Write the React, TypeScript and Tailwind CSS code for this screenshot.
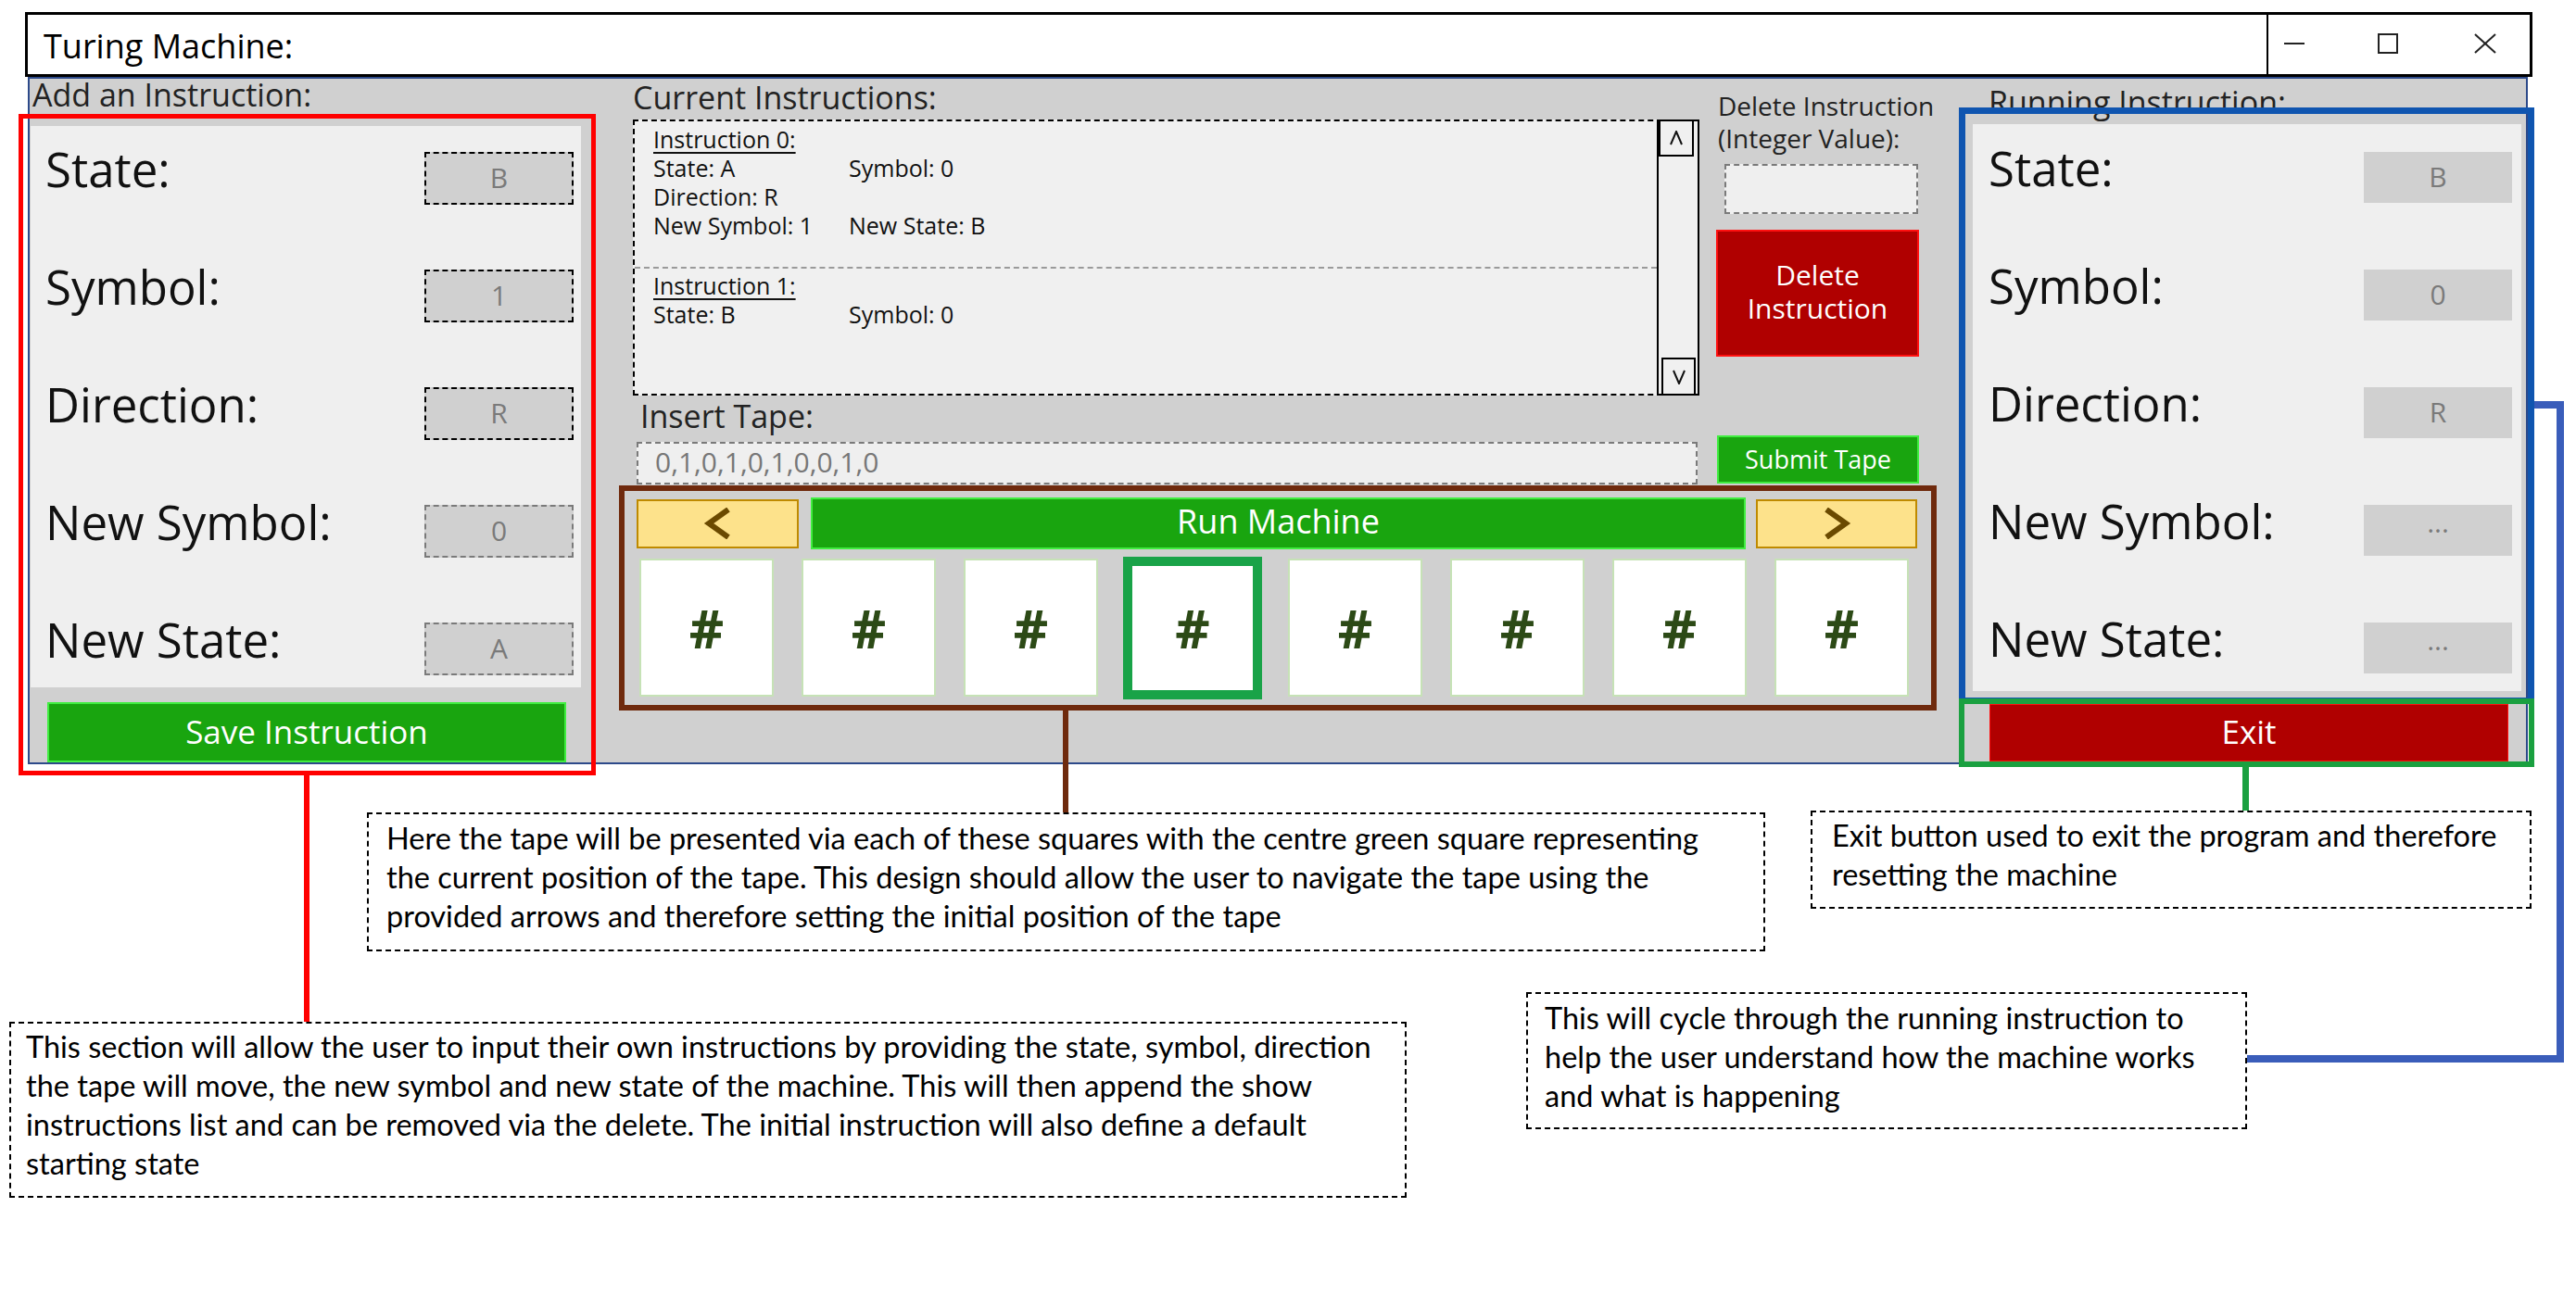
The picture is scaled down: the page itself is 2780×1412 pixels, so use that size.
import React from "react";

const leftRows = [
  { label: "State:", value: "B", box: "border-2 border-dashed border-black" },
  { label: "Symbol:", value: "1", box: "border-2 border-dashed border-black" },
  { label: "Direction:", value: "R", box: "border-2 border-dashed border-black" },
  { label: "New Symbol:", value: "0", box: "border-2 border-dashed border-[#7a7a7a]" },
  { label: "New State:", value: "A", box: "border-2 border-dashed border-[#7a7a7a]" },
];

const rightRows = [
  { label: "State:", value: "B" },
  { label: "Symbol:", value: "0" },
  { label: "Direction:", value: "R" },
  { label: "New Symbol:", value: "···" },
  { label: "New State:", value: "···" },
];

function Chevron({ dir }: { dir: "left" | "right" }) {
  return (
    <svg width="32" height="34" viewBox="0 0 32 34">
      <path
        d={dir === "left" ? "M27 2 L6 17 L27 32" : "M5 2 L26 17 L5 32"}
        stroke="#6b4a00"
        strokeWidth="6"
        fill="none"
      />
    </svg>
  );
}

function Cell({ active }: { active?: boolean }) {
  if (active) {
    return (
      <div className="w-[150px] h-[154px] -my-[2px] -ml-[3px] -mr-[2px] bg-white border-[10px] border-[#19a348] flex items-center justify-center">
        <span className="font-['Open_Sans',sans-serif] font-bold text-[58px] leading-none text-[#2c4a16]">#</span>
      </div>
    );
  }
  return (
    <div className="w-[145px] h-[149px] bg-white border-2 border-[#c6e2b6] flex items-center justify-center">
      <span className="font-['Open_Sans',sans-serif] font-bold text-[58px] leading-none text-[#2c4a16]">#</span>
    </div>
  );
}

export default function App() {
  return (
    <div className="relative w-[2780px] h-[1412px] bg-white overflow-hidden font-['Open_Sans',sans-serif] text-[#111]">
      <div className="pt-[13px] pl-[27px]">
        {/* Window */}
        <div className="w-[2706px]">
          {/* Title bar */}
          <div className="h-[70px] border-[3px] border-black bg-white flex">
            <div className="flex-1 pl-[17px] pt-[16px] text-[36px] leading-[35px] text-black">Turing Machine:</div>
            <div className="w-[284px] border-l-2 border-black flex items-center pb-[2px]">
              <svg className="ml-[17px]" width="22" height="4" viewBox="0 0 22 4">
                <line x1="0" y1="2" x2="22" y2="2" stroke="#222" strokeWidth="2" />
              </svg>
              <svg className="ml-[79px]" width="22" height="22" viewBox="0 0 22 22">
                <rect x="1" y="1" width="20" height="20" stroke="#222" strokeWidth="2" fill="none" />
              </svg>
              <svg className="ml-[82px]" width="24" height="22" viewBox="0 0 24 22">
                <line x1="1" y1="1" x2="23" y2="21" stroke="#222" strokeWidth="2" />
                <line x1="23" y1="1" x2="1" y2="21" stroke="#222" strokeWidth="2" />
              </svg>
            </div>
          </div>

          {/* Panel */}
          <div className="ml-[3px] w-[2698px] h-[742px] border-2 border-[#2d4a8a] bg-[#d0d0d0] flex">
            {/* Left column */}
            <div className="ml-[1px] w-[594px] flex flex-col">
              <div className="h-[51px] pl-[2px] pt-[1px] text-[34px] leading-[33px] text-[#222] whitespace-nowrap">Add an Instruction:</div>
              <div className="h-[606px] bg-[#efefef] flex flex-col pt-[28px] gap-[70px] pl-[16px] pr-[8px]">
                {leftRows.map((r) => (
                  <div key={r.label} className="h-[57px] flex items-start justify-between">
                    <div className="text-[51px] leading-[57px] -mt-[10px] text-[#111]">{r.label}</div>
                    <div className={`w-[161px] h-[57px] bg-[#d0d0d0] flex items-center justify-center text-[30px] leading-none text-[#7a7a7a] pb-[2px] ${r.box}`}>
                      {r.value}
                    </div>
                  </div>
                ))}
              </div>
              <div className="ml-[18px] mt-[16px] w-[560px] h-[65px] bg-[#19a50f] border-2 border-[#40ee40] flex items-center justify-center text-[35px] leading-none text-white pb-[2px]">
                Save Instruction
              </div>
            </div>

            {/* Middle column */}
            <div className="ml-[41px] w-[1422px] flex flex-col">
              {/* Row A */}
              <div className="h-[342px] flex">
                <div className="ml-[15px] w-[1151px] flex flex-col">
                  <div className="h-[44px] pt-[4px] text-[34px] leading-[33px] text-[#222] whitespace-nowrap">Current Instructions:</div>
                  <div className="h-[298px] bg-[#f0f0f0] border-2 border-dashed border-black [border-right-style:solid] flex">
                    <div className="flex-1 flex flex-col text-[25px] leading-[31px] text-[#111]">
                      <div className="h-[157px] pl-[20px] pt-[4px]">
                        <div className="underline decoration-2 underline-offset-4">Instruction 0:</div>
                        <div className="grid grid-cols-[211px_auto]">
                          <div>State: A</div>
                          <div>Symbol: 0</div>
                          <div>Direction: R</div>
                          <div></div>
                          <div>New Symbol: 1</div>
                          <div>New State: B</div>
                        </div>
                      </div>
                      <div className="border-t-2 border-dashed border-[#9a9a9a] pl-[20px] pt-[3px]">
                        <div className="underline decoration-2 underline-offset-4">Instruction 1:</div>
                        <div className="grid grid-cols-[211px_auto]">
                          <div>State: B</div>
                          <div>Symbol: 0</div>
                        </div>
                      </div>
                    </div>
                    <div className="w-[44px] -my-[2px] border-l-2 border-black flex flex-col justify-between">
                      <div className="w-[38px] h-[40px] border-2 border-black bg-[#f0f0f0] flex items-center justify-center">
                        <svg width="14" height="16" viewBox="0 0 14 16">
                          <polyline points="1,15 7,1 13,15" stroke="#111" strokeWidth="2" fill="none" />
                        </svg>
                      </div>
                      <div className="ml-[3px] w-[37px] h-[41px] border-2 border-black bg-[#f0f0f0] flex items-center justify-center">
                        <svg width="14" height="16" viewBox="0 0 14 16">
                          <polyline points="1,1 7,15 13,1" stroke="#111" strokeWidth="2" fill="none" />
                        </svg>
                      </div>
                    </div>
                  </div>
                </div>
                <div className="ml-[17px] w-[220px] flex flex-col">
                  <div className="mt-[12px] pl-[3px] text-[28px] leading-[35px] text-[#222] whitespace-nowrap">
                    <div>Delete Instruction</div>
                    <div>(Integer Value):</div>
                  </div>
                  <div className="mt-[10px] ml-[10px] w-[209px] h-[54px] bg-[#efefef] border-2 border-dashed border-[#7a7a7a]" />
                  <div className="mt-[17px] ml-[1px] w-[219px] h-[137px] bg-[#b00000] border-2 border-[#ff1010] flex flex-col items-center justify-center text-center text-[30px] leading-[36px] text-white pb-[4px]">
                    <div>Delete</div>
                    <div>Instruction</div>
                  </div>
                </div>
              </div>

              {/* Row B */}
              <div className="h-[97px] flex items-end">
                <div className="ml-[19px] w-[1145px] mb-[1px] flex flex-col">
                  <div className="h-[50px] pl-[4px] pt-[6px] text-[34px] leading-[33px] text-[#222]">Insert Tape:</div>
                  <div className="h-[46px] bg-[#efefef] border-2 border-dashed border-[#7a7a7a] pl-[18px] pb-[2px] flex items-center text-[30px] leading-none text-[#777]">
                    0,1,0,1,0,1,0,0,1,0
                  </div>
                </div>
                <div className="ml-[21px] mb-[2px] w-[218px] h-[52px] bg-[#19a50f] border-2 border-[#40ee40] flex items-center justify-center text-[27px] leading-none text-white pb-[2px]">
                  Submit Tape
                </div>
              </div>

              {/* Row C: tape */}
              <div className="h-[243px] border-[6px] border-[#6f2a0d] bg-[#d0d0d0] flex flex-col">
                <div className="mt-[7px] h-[56px] flex items-center">
                  <div className="ml-[13px] w-[175px] h-[53px] bg-[#fde28b] border-2 border-[#bf8a00] flex items-center justify-center">
                    <Chevron dir="left" />
                  </div>
                  <div className="ml-[13px] w-[1009px] h-[56px] bg-[#19a50f] border-2 border-[#40ee40] flex items-center justify-center text-[36px] leading-none text-white pb-[5px]">
                    Run Machine
                  </div>
                  <div className="ml-[11px] w-[174px] h-[53px] bg-[#fde28b] border-2 border-[#bf8a00] flex items-center justify-center">
                    <Chevron dir="right" />
                  </div>
                </div>
                <div className="mt-[10px] ml-[16px] h-[149px] flex items-center gap-[30px]">
                  <Cell />
                  <Cell />
                  <Cell />
                  <Cell active />
                  <Cell />
                  <Cell />
                  <Cell />
                  <Cell />
                </div>
              </div>
            </div>

            {/* Right column */}
            <div className="ml-[39px] w-[592px] flex flex-col">
              <div className="h-[49px] pl-[17px] pt-[9px] text-[34px] leading-[33px] text-[#222] whitespace-nowrap">Running Instruction:</div>
              <div className="h-[612px] bg-[#efefef] flex flex-col pt-[30px] gap-[72px] pl-[17px] pr-[10px]">
                {rightRows.map((r) => (
                  <div key={r.label} className="h-[55px] flex items-start justify-between">
                    <div className="text-[51px] leading-[55px] -mt-[10px] text-[#111]">{r.label}</div>
                    <div className="w-[160px] h-[55px] bg-[#d0d0d0] flex items-center justify-center text-[30px] leading-none text-[#7a7a7a] pb-[2px]">
                      {r.value}
                    </div>
                  </div>
                ))}
              </div>
              <div className="ml-[18px] mt-[14px] w-[560px] h-[62px] bg-[#b00000] border border-[#ff1010] flex items-center justify-center text-[35px] leading-none text-white pb-[3px]">
                Exit
              </div>
            </div>
          </div>
        </div>
      </div>

      {/* Annotation overlays */}
      <div className="absolute left-[20px] top-[123px] w-[623px] h-[714px] border-[5px] border-[#ff0000]" />
      <div className="absolute left-[328px] top-[836px] w-[6px] h-[268px] bg-[#ff0000]" />

      <div className="absolute left-[1147px] top-[766px] w-[6px] h-[112px] bg-[#6f2a0d]" />

      <div className="absolute left-[2114px] top-[116px] w-[621px] h-[644px] border-[7px] border-[#0f55b0]" />
      <div className="absolute left-[2114px] top-[754px] w-[621px] h-[74px] border-[6px] border-[#1aa040]" />
      <div className="absolute left-[2420px] top-[827px] w-[7px] h-[50px] bg-[#1aa040]" />

      <div className="absolute left-[2735px] top-[433px] w-[32px] h-[8px] bg-[#3a5dba]" />
      <div className="absolute left-[2759px] top-[433px] w-[8px] h-[714px] bg-[#3a5dba]" />
      <div className="absolute left-[2425px] top-[1139px] w-[342px] h-[8px] bg-[#3a5dba]" />

      {/* Callout boxes */}
      <div className="absolute left-[396px] top-[877px] w-[1509px] h-[150px] bg-white border-2 border-dashed border-black pl-[19px] pt-[5px] font-['Lato',sans-serif] text-[32.5px] leading-[42px] text-black whitespace-nowrap">
        <div>Here the tape will be presented via each of these squares with the centre green square representing</div>
        <div>the current position of the tape. This design should allow the user to navigate the tape using the</div>
        <div>provided arrows and therefore setting the initial position of the tape</div>
      </div>

      <div className="absolute left-[1954px] top-[875px] w-[778px] h-[106px] bg-white border-2 border-dashed border-black pl-[21px] pt-[4px] font-['Lato',sans-serif] text-[32.5px] leading-[42px] text-black whitespace-nowrap">
        <div>Exit button used to exit the program and therefore</div>
        <div>resetting the machine</div>
      </div>

      <div className="absolute left-[1647px] top-[1071px] w-[778px] h-[148px] bg-white border-2 border-dashed border-black pl-[18px] pt-[5px] font-['Lato',sans-serif] text-[32.5px] leading-[42px] text-black whitespace-nowrap">
        <div>This will cycle through the running instruction to</div>
        <div>help the user understand how the machine works</div>
        <div>and what is happening</div>
      </div>

      <div className="absolute left-[10px] top-[1103px] w-[1508px] h-[190px] bg-white border-2 border-dashed border-black pl-[16px] pt-[4px] font-['Lato',sans-serif] text-[32.5px] leading-[42px] text-black whitespace-nowrap">
        <div>This section will allow the user to input their own instructions by providing the state, symbol, direction</div>
        <div>the tape will move, the new symbol and new state of the machine. This will then append the show</div>
        <div>instructions list and can be removed via the delete. The initial instruction will also define a default</div>
        <div>starting state</div>
      </div>
    </div>
  );
}
